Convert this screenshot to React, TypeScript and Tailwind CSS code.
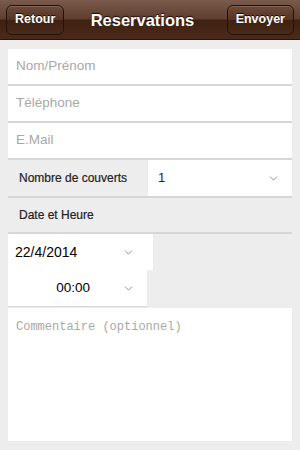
import { ChevronDown } from 'lucide-react';

const FIELDS = ['Nom/Prénom', 'Téléphone', 'E.Mail'];

function HeaderButton({ label }: { label: string }): JSX.Element {
  return (
    <button className="h-[30px] px-[8px] rounded-[6px] border border-[#24120a] bg-[linear-gradient(180deg,#6b4b3b_0%,#553323_50%,#3e2112_51%,#4a2a1a_100%)] shadow-[inset_0_1px_0_rgba(255,255,255,0.15)] text-white text-[12.5px] font-bold [text-shadow:0_-1px_0_#1a0a02]">
      {label}
    </button>
  );
}

export default function App(): JSX.Element {
  return (
    <div className="w-[300px] h-[450px] bg-[#ededed] font-['Liberation_Sans',Arial,sans-serif] overflow-hidden">
      {/* Header bar */}
      <div className="h-[40px] flex items-center justify-between px-[6px] bg-[linear-gradient(180deg,#7a5a4a_0%,#5e3e2e_48%,#3f2111_52%,#4b2a19_100%)] border-b border-[#2a1408]">
        <HeaderButton label="Retour" />
        <h1 className="text-white text-[16.5px] font-bold mt-[2px] ml-[-6px] [text-shadow:0_-1px_1px_#1a0a02]">
          Reservations
        </h1>
        <HeaderButton label="Envoyer" />
      </div>

      <div className="px-[8px] pt-[9px]">
        {FIELDS.map((field) => (
          <div
            key={field}
            className="h-[37px] bg-white border-b-2 border-[#d6d6d6] flex items-center px-[8px] text-[13.5px] text-[#a8a8a8]">
            {field}
          </div>
        ))}

        {/* Couverts */}
        <div className="h-[38px] flex border-b-2 border-[#d6d6d6]">
          <div className="w-[140px] flex items-center px-[11px] text-[12px] text-[#222] [-webkit-text-stroke:0.2px_#222]">
            Nombre de couverts
          </div>
          <div className="flex-1 bg-white flex items-center justify-between pl-[10px] pr-[12px] text-[13px] text-[#222]">
            <span>1</span>
            <ChevronDown size={13} strokeWidth={1.5} className="text-[#777]" />
          </div>
        </div>

        {/* Date et heure */}
        <div className="h-[36px] flex items-center px-[11px] text-[12px] text-[#222] border-b-2 border-[#d6d6d6] [-webkit-text-stroke:0.2px_#222]">
          Date et Heure
        </div>
        <div className="w-[145px] h-[36px] bg-white flex items-center justify-between pl-[7px] pr-[18px] text-[14px] text-black">
          <span>22/4/2014</span>
          <ChevronDown size={13} strokeWidth={1.5} className="text-[#777]" />
        </div>
        <div className="w-[139px] h-[37px] bg-white flex items-center justify-end gap-[32px] pr-[12px] text-[13.5px] text-black border-b border-[#d6d6d6]">
          <span>00:00</span>
          <ChevronDown size={13} strokeWidth={1.5} className="text-[#777]" />
        </div>

        {/* Commentaire */}
        <textarea
          placeholder="Commentaire (optionnel)"
          className="mt-[1px] block w-full h-[133px] bg-white resize-none outline-none px-[8px] pt-[10px] text-[12px] font-['Liberation_Mono',monospace] placeholder:text-[#a8a8a8]"
        />
      </div>
    </div>
  );
}
